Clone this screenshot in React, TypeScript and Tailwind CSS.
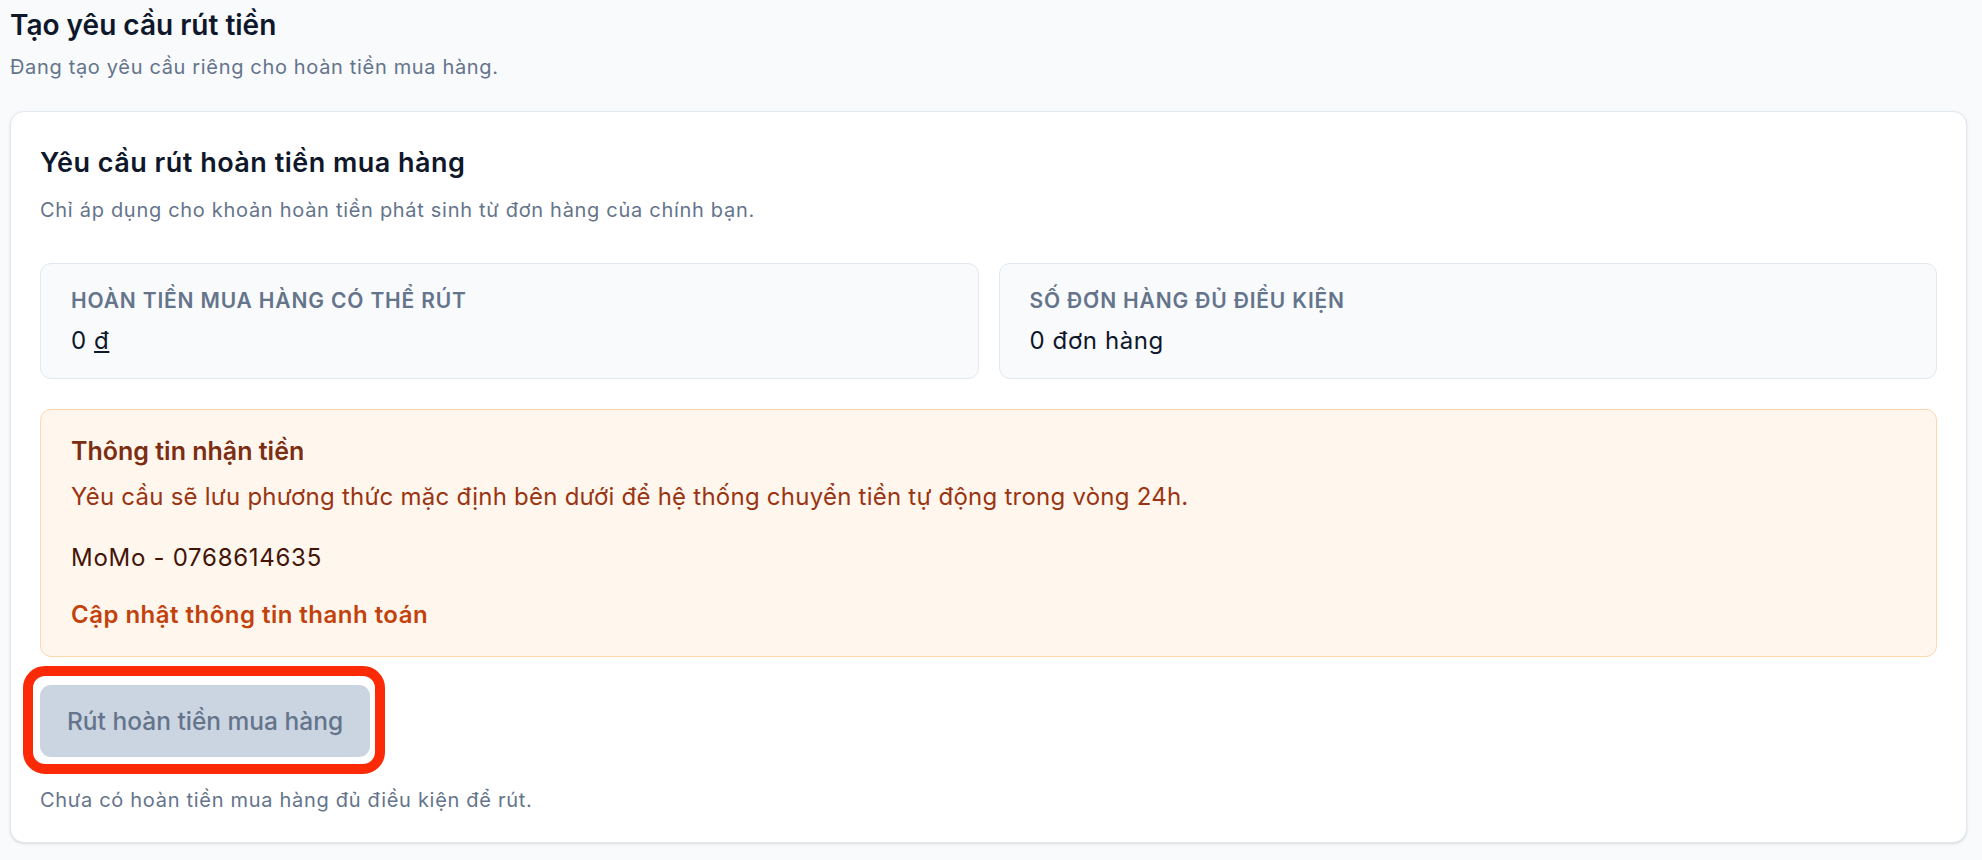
import React from "react";

export default function App() {
  return (
    <div
      className="min-h-screen bg-[#f8fafc] pl-[10px] pr-[15px] pt-[7px] text-[#0f172a]"
      style={{ fontFamily: "Inter, 'Noto Sans', sans-serif" }}
    >
      <h1 className="text-[28px] leading-[36px] font-semibold text-[#0f172a]">Tạo yêu cầu rút tiền</h1>
      <p className="mt-[10px] text-[20px] leading-[28px] tracking-[0.033em] text-[#64748b]">
        Đang tạo yêu cầu riêng cho hoàn tiền mua hàng.
      </p>

      <div className="mt-[30px] rounded-[14px] border border-[#e2e8f0] bg-white px-[29px] pt-[33px] pb-[28px] shadow-sm">
        <h2 className="text-[27px] leading-[36px] font-semibold tracking-[0.018em] text-[#0f172a]">
          Yêu cầu rút hoàn tiền mua hàng
        </h2>
        <p className="mt-[15px] text-[20px] leading-[28px] tracking-[0.035em] text-[#64748b]">
          Chỉ áp dụng cho khoản hoàn tiền phát sinh từ đơn hàng của chính bạn.
        </p>

        <div className="mt-[39px] grid grid-cols-2 gap-[20px]">
          <div className="rounded-[11px] border border-[#e2e8f0] bg-[#f8fafc] px-[30px] pt-[23px] pb-[21px]">
            <div className="text-[21px] leading-[28px] font-semibold uppercase tracking-[0.04em] text-[#64748b]">
              Hoàn tiền mua hàng có thể rút
            </div>
            <div className="mt-[10px] text-[24px] leading-[32px] tracking-[0.025em] text-[#0f172a]">
              0 <span className="underline underline-offset-2">đ</span>
            </div>
          </div>
          <div className="rounded-[11px] border border-[#e2e8f0] bg-[#f8fafc] px-[30px] pt-[23px] pb-[21px]">
            <div className="text-[21px] leading-[28px] font-semibold uppercase tracking-[0.04em] text-[#64748b]">
              Số đơn hàng đủ điều kiện
            </div>
            <div className="mt-[10px] text-[24px] leading-[32px] tracking-[0.025em] text-[#0f172a]">0 đơn hàng</div>
          </div>
        </div>

        <div className="mt-[30px] rounded-[11px] border border-[#fed7aa] bg-[#fff7ed] px-[30px] pt-[25px] pb-[25px]">
          <div className="text-[25px] leading-[32px] font-semibold text-[#7c2d12]">Thông tin nhận tiền</div>
          <div className="mt-[14px] text-[24px] leading-[32px] tracking-[0.01em] text-[#9a3412]">
            Yêu cầu sẽ lưu phương thức mặc định bên dưới để hệ thống chuyển tiền tự động trong vòng 24h.
          </div>
          <div className="mt-[29px] text-[24px] leading-[32px] tracking-[0.03em] text-[#431407]">MoMo - 0768614635</div>
          <div className="mt-[25px] text-[24px] leading-[32px] font-semibold tracking-[0.02em] text-[#c2410c]">
            Cập nhật thông tin thanh toán
          </div>
        </div>

        <div className="mt-[28px] flex">
          <div className="relative">
            <button
              disabled
              className="h-[72px] rounded-[11px] bg-[#cbd5e1] px-[27px] text-[24.5px] font-medium text-[#64748b]"
            >
              Rút hoàn tiền mua hàng
            </button>
            <span className="pointer-events-none absolute -top-[19px] -bottom-[17px] -left-[17px] -right-[15px] rounded-[22px] border-[10px] border-[#fd2a08]" />
          </div>
        </div>

        <p className="mt-[29px] text-[20px] leading-[28px] tracking-[0.035em] text-[#64748b]">
          Chưa có hoàn tiền mua hàng đủ điều kiện để rút.
        </p>
      </div>
    </div>
  );
}
